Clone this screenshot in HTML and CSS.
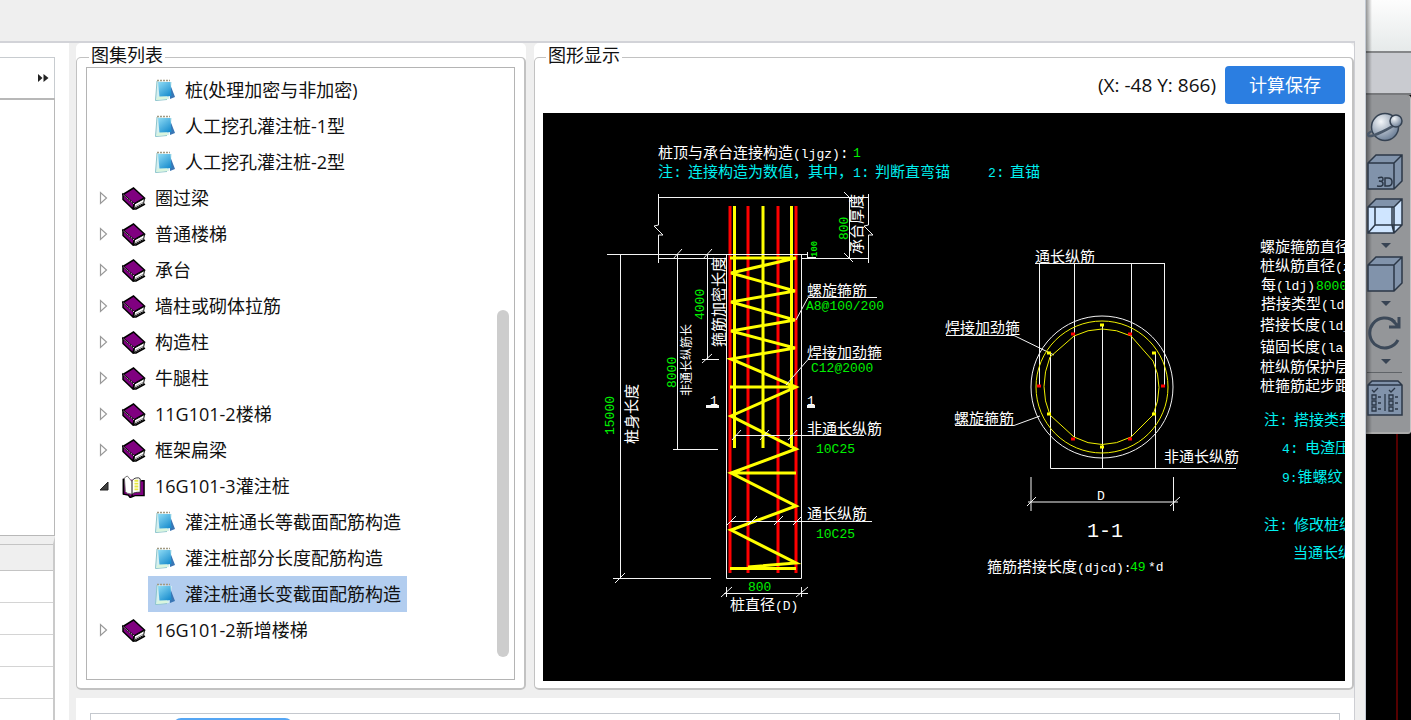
FILE: index.html
```html
<!DOCTYPE html>
<html lang="zh-CN">
<head>
<meta charset="utf-8">
<title>图集列表</title>
<link rel="stylesheet" href="styles.css">
</head>
<body>
<svg class="defs" aria-hidden="true">
  <defs>
    <linearGradient id="sheet" x1="0" y1="0" x2="0.7" y2="1"><stop offset="0" stop-color="#8fdcf5"/><stop offset="1" stop-color="#1c8fcf"/></linearGradient>
    <radialGradient id="orb" cx="0.35" cy="0.3" r="0.7"><stop offset="0" stop-color="#f4f7fa"/><stop offset="1" stop-color="#71839a"/></radialGradient>
  </defs>
  <symbol id="note" viewBox="0 0 20 23">
    <path d="M15 5l5 13-5 2z" fill="#3a76b4"/>
    <path d="M2 2L.5 21.500 14 20l3-17z" fill="#d5eff0"/>
    <path d="M2 2L.5 21.500l11.500-1" fill="none" stroke="#8cc4cc"/>
    <path d="M3 3h12.500l1 14-12 1z" fill="url(#sheet)"/>
    <path d="M3 17.500h9l1 2.500-12 1z" fill="#d9f5de"/>
    <path d="M2 1.500h13" stroke="#a39a82" stroke-width="1.500" stroke-dasharray="2 1"/>
  </symbol>
  <symbol id="book" viewBox="0 0 24 23">
    <path d="M1 7.500L11.500 1 22.500 11 12 17z" fill="#800080" stroke="#000" stroke-width="1.500"/>
    <path d="M1 7.500v5L11 22l1-5z" fill="#800080" stroke="#000" stroke-width="1.500"/>
    <path d="M1.500 8L12 17" stroke="#e6bfe6" stroke-dasharray="1.500 1"/>
    <path d="M12.500 17l10-5.500-1 5-9.500 5z" fill="#fff" stroke="#000"/>
    <path d="M13 19.500l8.500-4.500" stroke="#999"/>
    <path d="M11 22h3l9-5" fill="none" stroke="#000" stroke-width="1.500"/>
  </symbol>
  <symbol id="open-book" viewBox="0 0 24 24">
    <path d="M1 4v16l5 1 2 2.500 5-2h9.500V6h-3" fill="#800080" stroke="#000" stroke-width="1.500"/>
    <path d="M2 3l3-2 5 6v13l-5-1-2-2z" fill="#fff" stroke="#777"/>
    <path d="M10 6c2-3 4-3 7-3l1.500 1v14c-4 0-6 0-8.500 2z" fill="#fff" stroke="#333"/>
    <path d="M12.500 6h4M12.500 9h4M12.500 12h4M12.500 15h4" stroke="#e6e640" stroke-width="2"/>
    <path d="M1 4v16M10 20v2" stroke="#000" stroke-width="1.500"/>
  </symbol>
  <symbol id="closed" viewBox="0 0 10 14"><path d="M1.500 1.500v11l6-5.500z" fill="#fff" stroke="#999" stroke-width="1.200"/></symbol>
  <symbol id="opened" viewBox="0 0 10 14"><path d="M9 3v8H1z" fill="#404040" stroke="#222"/></symbol>
</svg>

<main class="window">
  <header class="titlebar"></header>
  <div class="workspace">
    <aside class="side">
      <div class="side-tools"><button class="more" aria-label="更多"><svg viewBox="0 0 12 10"><path d="M1 1v8l4.500-4zM6.500 1v8l5-4z" fill="#222"/></svg></button></div>
      <div class="side-view"></div>
      <table class="side-table">
        <thead><tr><th></th></tr></thead>
        <tbody><tr><td></td></tr><tr><td></td></tr><tr><td></td></tr><tr><td></td></tr><tr><td></td></tr></tbody>
      </table>
    </aside>

    <div class="content">
      <div class="groups">
        <fieldset class="group">
          <legend>图集列表</legend>
          <div class="list">
            <ul class="tree">
              <li class="leaf"><span class="item"><svg class="note"><use href="#note"/></svg>桩(处理加密与非加密)</span></li>
              <li class="leaf"><span class="item"><svg class="note"><use href="#note"/></svg>人工挖孔灌注桩-1型</span></li>
              <li class="leaf"><span class="item"><svg class="note"><use href="#note"/></svg>人工挖孔灌注桩-2型</span></li>
              <li><svg class="arrow"><use href="#closed"/></svg><svg class="book"><use href="#book"/></svg>圈过梁</li>
              <li><svg class="arrow"><use href="#closed"/></svg><svg class="book"><use href="#book"/></svg>普通楼梯</li>
              <li><svg class="arrow"><use href="#closed"/></svg><svg class="book"><use href="#book"/></svg>承台</li>
              <li><svg class="arrow"><use href="#closed"/></svg><svg class="book"><use href="#book"/></svg>墙柱或砌体拉筋</li>
              <li><svg class="arrow"><use href="#closed"/></svg><svg class="book"><use href="#book"/></svg>构造柱</li>
              <li><svg class="arrow"><use href="#closed"/></svg><svg class="book"><use href="#book"/></svg>牛腿柱</li>
              <li><svg class="arrow"><use href="#closed"/></svg><svg class="book"><use href="#book"/></svg>11G101-2楼梯</li>
              <li><svg class="arrow"><use href="#closed"/></svg><svg class="book"><use href="#book"/></svg>框架扁梁</li>
              <li><svg class="arrow"><use href="#opened"/></svg><svg class="book"><use href="#open-book"/></svg>16G101-3灌注桩</li>
              <li class="leaf"><span class="item"><svg class="note"><use href="#note"/></svg>灌注桩通长等截面配筋构造</span></li>
              <li class="leaf"><span class="item"><svg class="note"><use href="#note"/></svg>灌注桩部分长度配筋构造</span></li>
              <li class="leaf"><span class="item selected"><svg class="note"><use href="#note"/></svg>灌注桩通长变截面配筋构造</span></li>
              <li><svg class="arrow"><use href="#closed"/></svg><svg class="book"><use href="#book"/></svg>16G101-2新增楼梯</li>
            </ul>
            <div class="track"><div class="thumb"></div></div>
          </div>
        </fieldset>

        <fieldset class="group view">
          <legend>图形显示</legend>
          <div class="view-bar"><output class="coords">(X: -48 Y: 866)</output><button class="save">计算保存</button></div>
          <svg class="drawing" viewBox="543 114 802 568" preserveAspectRatio="xMinYMin slice">
            <g class="red">
              <path d="M730 207V574M748 207V574M778 207V574M796 207V574"/>
            </g>
            <g class="yellow">
              <path d="M734.500 207V449M763 207V449M791.500 207V449"/>
              <path d="M730 259H796L731 274L795 292L731 303L795 321L731 332L795 349L731 360L796 388L731 417L796 450L731 474L796 507L731 531L796 564L748 568M730 388H796M730 474H796M730 569.500H796"/>
            </g>
            <g class="white">
              <path d="M658.500 195V226L654 227L663 236L658.500 236V264M658 198.500H869M658 259.500H726M801 259.500H869M868.500 195V226L864 227L873 236L868.500 236V264"/>
              <path d="M849.500 198V260M844 193L853 202M844 254L853 263"/>
              <path d="M607 255.500H808M807.500 253V260M808 258.500H816M620.500 255V579M613 579.500H711M615 584L625 574M677.500 255V450M673 450.500H718M673 260L682 250M707.500 255V360M702 360.500H719M703 260L712 250M702 364L712 355"/>
              <path d="M726.500 255.500H801.500V579.500H726.500z"/>
              <path d="M726.500 588V598M801.500 588V598M724 594.500H808M721 598L732 588M796 598L808 588"/>
              <path d="M796 321L808 298.500H877M786 386L808 360.500H877M735 436.500H864M731 522.500H872"/>
              <path d="M732 441L741 431M760 441L769 431M788 441L797 431M727 526L736 517M748 526L757 517M774 526L783 517M793 526L802 517"/>
              <path class="heavy" d="M706 407.500H719M807 407.500H815"/>
              <path d="M1035 264.500H1164.500M1039.500 264V388M1074.500 264V438M1131.500 264V438M1164.500 264V388M1050.500 355V469.500H1236M1102.500 326V469M1155.500 355V469"/>
              <path d="M946 336.500H1014L1054 356M955 426.500H1014L1040 417"/>
              <circle cx="1102" cy="388" r="71"/>
              <path d="M1031 478V512M1173.500 478V512M1028 503H1178M1027 507L1036 498M1170 507L1180 498"/>
            </g>
            <g class="ring">
              <circle cx="1102" cy="388" r="66"/>
              <path d="M1074 337Q1102 323 1131 337L1153 362Q1165 388 1153 416L1131 438Q1102 453 1074 438L1050 416Q1038 388 1050 358z"/>
            </g>
            <path class="dot-y" d="M1100 326h4M1047 354h4M1152 354h4M1047 415h4M1152 415h4M1100 448h4"/>
            <path class="dot-r" d="M1071 335h4M1128 335h4M1037 387h4M1161 387h4M1071 440h4M1128 440h4"/>

            <g class="cad">
              <text x="658" y="159">桩顶与承台连接构造<tspan class="code">(ljgz)</tspan>:</text>
              <text class="code green" x="853" y="158">1</text>
              <text class="cyan" x="658" y="178">注: </text>
              <text class="cyan" x="688" y="178">连接构造为数值，其中，<tspan class="code">1</tspan>:</text>
              <text class="cyan" x="875" y="178">判断直弯锚</text>
              <text class="cyan" x="988" y="178"><tspan class="code">2</tspan>:</text>
              <text class="cyan" x="1010" y="178">直锚</text>
              <text x="807" y="297">螺旋箍筋</text>
              <text class="code green" x="806" y="311">A8@100/200</text>
              <text x="807" y="359">焊接加劲箍</text>
              <text class="code green" x="811" y="373">C12@2000</text>
              <text x="807" y="435">非通长纵筋</text>
              <text class="code green" x="816" y="454">10C25</text>
              <text x="807" y="520">通长纵筋</text>
              <text class="code green" x="816" y="539">10C25</text>
              <text class="code green" x="748" y="592">800</text>
              <text x="730" y="611">桩直径<tspan class="code">(D)</tspan></text>
              <text class="code" x="710" y="406">1</text>
              <text class="code" x="807" y="406">1</text>
              <text x="1035" y="263">通长纵筋</text>
              <text x="945" y="334">焊接加劲箍</text>
              <text x="954" y="425">螺旋箍筋</text>
              <text x="1164" y="463">非通长纵筋</text>
              <text class="code" x="1097" y="501">D</text>
              <text class="section" x="1087" y="538">1-1</text>
              <text x="987" y="573">箍筋搭接长度<tspan class="code">(djcd):</tspan></text>
              <text class="code green" x="1130" y="572">49</text>
              <text class="code" x="1148" y="572">*d</text>

              <text transform="translate(614 436) rotate(-90)" class="code green">15000</text>
              <text transform="translate(637 445) rotate(-90)">桩身长度</text>
              <text transform="translate(676 389) rotate(-90)" class="code green">8000</text>
              <text transform="translate(691 397) rotate(-90)" class="small">非通长纵筋长</text>
              <text transform="translate(704 321) rotate(-90)" class="code green">4000</text>
              <text transform="translate(724 348) rotate(-90)">箍筋加密长度</text>
              <text transform="translate(817 258) rotate(-90)" class="tiny green">100</text>
              <text transform="translate(848 241) rotate(-90)" class="code green">800</text>
              <text transform="translate(862 255) rotate(-90)">承台厚度</text>

              <text x="1260" y="253">螺旋箍筋直径</text>
              <text x="1260" y="272">桩纵筋直径<tspan class="code">(z</tspan></text>
              <text x="1261" y="291">每<tspan class="code">(ldj)</tspan></text>
              <text class="code green" x="1316" y="291">8000</text>
              <text x="1261" y="310">搭接类型<tspan class="code">(ld</tspan></text>
              <text x="1260" y="331">搭接长度<tspan class="code">(ld_</tspan></text>
              <text x="1260" y="353">锚固长度<tspan class="code">(la)</tspan></text>
              <text x="1260" y="373">桩纵筋保护层</text>
              <text x="1260" y="392">桩箍筋起步距</text>
              <text class="cyan" x="1264" y="426">注:</text>
              <text class="cyan" x="1294" y="426">搭接类型</text>
              <text class="cyan" x="1282" y="454"><tspan class="code">4</tspan>:</text>
              <text class="cyan" x="1305" y="454">电渣压</text>
              <text class="cyan" x="1282" y="483"><tspan class="code">9:</tspan>锥螺纹</text>
              <text class="cyan" x="1264" y="531">注:</text>
              <text class="cyan" x="1294" y="531">修改桩纵</text>
              <text class="cyan" x="1293" y="559">当通长纵</text>
            </g>
          </svg>
        </fieldset>
      </div>
      <section class="lower"><div class="tabs"><div class="tab"></div></div></section>
    </div>
  </div>
</main>

<aside class="backdrop">
  <div class="ribbon"></div>
  <div class="ribbon-foot"></div>
  <nav class="dock">
    <button aria-label="动态观察"><svg viewBox="0 0 36 36"><circle cx="18" cy="17" r="13.500" fill="url(#orb)" stroke="#354252" stroke-width="1.500"/><path d="M5 21q-6 3-3 5c4 1 22-8 28-13" fill="none" stroke="#4a5869" stroke-width="2.500"/><circle cx="29" cy="11" r="6" fill="url(#orb)" stroke="#354252" stroke-width="1.500"/></svg></button>
    <button aria-label="三维"><svg viewBox="0 0 36 36"><path d="M1 9L9 1h26v26l-8 8H1zM1 9h26v26M27 9l8-8" fill="#8193ab" stroke="#2b3747" stroke-width="1.500"/><g fill="none" stroke="#2b3747" stroke-width="1.500"><path d="M11 24q5-2 5 1t-4 2q4 0 4 3t-6 2M18 24h3q4 0 4 4t-4 4h-3z"/></g></svg></button>
    <button aria-label="线框"><svg viewBox="0 0 36 36"><path d="M1 9L9 1h26v26l-8 8H1z" fill="#cfe5ff"/><path d="M1 9L9 1h26l-8 8z" fill="#8193ab"/><path d="M1 9L9 1h26v26l-8 8H1zM1 9h26v26M27 9l8-8M8 9v18h27M8 27l-7 8M25 9v18M27 35l-2-8" fill="none" stroke="#2b3747" stroke-width="1.500"/></svg></button>
    <i class="caret"></i>
    <button aria-label="视图"><svg viewBox="0 0 36 36"><path d="M1 9L9 1h26v26l-8 8H1zM1 9h26v26M27 9l8-8" fill="#8193ab" stroke="#2b3747" stroke-width="1.500"/></svg></button>
    <i class="caret"></i>
    <button aria-label="旋转"><svg viewBox="0 0 36 36"><path d="M28 8A15 15 0 1 0 31 26" fill="none" stroke="#3c4959" stroke-width="3"/><path d="M32 3v10H22M24 5l8 8" fill="none" stroke="#3c4959" stroke-width="3"/></svg></button>
    <i class="caret"></i>
    <hr>
    <button aria-label="选项"><svg viewBox="0 0 36 36"><path d="M1 5l4-4h26l4 4v30H1zM1 5h34" fill="#8193ab" stroke="#2b3747" stroke-width="1.500"/><path d="M5 10l2 2 4-4M22 10l2 2 4-4M5 15h4v4H5zM5 21h4v4H5zM5 27h4v4H5zM22 15h4v4h-4zM22 21h4v4h-4zM22 27h4v4h-4zM11 17h3M11 23h3M11 29h3M28 17h3M28 23h3M28 29h3M18 14v17" fill="none" stroke="#2b3747" stroke-width="1.300"/></svg></button>
  </nav>
  <div class="model"></div>
</aside>
</body>
</html>
```
FILE: styles.css
```css
* { box-sizing: border-box; }
body {
  margin: 0;
  height: 100vh;
  display: flex;
  overflow: hidden;
  background: #000;
  color: #111;
  font: 18px/20px "Open Sans", "Noto Sans CJK SC", sans-serif;
}
button { margin: 0; padding: 0; border: 0; background: none; font: inherit; }
.defs { position: absolute; width: 0; height: 0; }

.window {
  flex: 1;
  min-width: 0;
  display: flex;
  flex-direction: column;
  background: #efefef;
  border-right: 1px solid #c3cad3;
}
.titlebar { flex: 0 0 41px; }
.workspace {
  flex: 1;
  min-height: 0;
  display: flex;
  gap: 7px;
  margin-right: 10px;
  border-top: 2px solid #d2d3d8;
  border-right: 1px solid #cdced3;
}

.side {
  flex: 0 0 69px;
  display: flex;
  flex-direction: column;
  padding: 14px 14px 0 0;
  background: #fff;
}
.side-tools {
  flex: 0 0 41px;
  display: flex;
  align-items: center;
  justify-content: flex-end;
  padding-right: 5px;
  border: solid #c8ccd0;
  border-width: 1px 1px 0 0;
}
.more { width: 12px; height: 10px; display: flex; }
.side-view {
  flex: 0 0 438px;
  border: solid #b8b8b8;
  border-width: 2px 1px 1px 0;
}
.side-table {
  width: 100%;
  border-top: 8px solid #efefef;
  border-right: 2px solid #cacaca;
  border-spacing: 0;
}
.side-table th { height: 27px; padding: 0; background: #efefef; border: solid #c4c4c4; border-width: 1px 0; }
.side-table td { height: 32px; padding: 0; border-bottom: 1px solid #d4d4d4; }

.content { flex: 1; min-width: 0; display: flex; flex-direction: column; gap: 8px; }
.groups {
  flex: 1;
  min-height: 0;
  display: grid;
  grid-template-columns: 450px minmax(0, 1fr);
  gap: 8px;
}
.group {
  position: relative;
  min-width: 0;
  margin: 4px 0 0;
  padding: 0 9px 8px;
  display: flex;
  flex-direction: column;
  border: 2px solid #c2c2c2;
  border-width: 1px 2px 2px 1px;
  border-radius: 5px;
  background: #fff;
  box-shadow: 0 -14px 0 #fff;
}
.group legend { margin-left: 3px; padding: 0 2px; height: 20px; line-height: 16px; background: #fff; }
.list {
  flex: 1;
  min-height: 0;
  display: flex;
  border: 1px solid #b4b4b4;
}
.tree { flex: 1; margin: 0; padding: 4px 0 0 12px; list-style: none; }
.tree li { display: flex; align-items: center; height: 36px; white-space: nowrap; }
.tree .leaf { padding-left: 49px; }
.item { display: flex; align-items: center; height: 36px; padding: 0 6px 0 7px; }
.selected { background: #b2cdef; }
.arrow { width: 10px; height: 14px; margin-right: 13px; }
.book { width: 24px; height: 23px; margin-right: 9px; }
.note { width: 20px; height: 23px; margin-right: 10px; }
.track { width: 12px; margin-right: 5px; padding-bottom: 22px; display: flex; align-items: flex-end; }
.thumb { width: 100%; height: 59%; border-radius: 6px; background: #cdcdcd; }

.view { padding: 0 7px 7px 8px; }
.view-bar { display: flex; align-items: center; justify-content: flex-end; gap: 9px; height: 36px; margin-bottom: 10px; }
.coords { font-size: 19px; }
.save { width: 120px; height: 38px; border-radius: 4px; background: #2b7ee1; color: #fff; }
.drawing { flex: 1; width: 100%; min-height: 0; background: #000; }

.white, .yellow, .red, .ring { fill: none; }
.white { stroke: #f4f4f4; }
.heavy { stroke-width: 3px; }
.yellow { stroke: #ff0; stroke-width: 3px; }
.red { stroke: #f00; stroke-width: 3px; }
.ring { stroke: #f0f000; }
.dot-y { stroke: #ff0; stroke-width: 3px; }
.dot-r { stroke: #f00; stroke-width: 3px; }
.cad { font: 15px "Liberation Mono", "Noto Sans CJK SC", monospace; fill: #fff; }
.code { font-size: 13px; }
.small { font-size: 12px; }
.tiny { font-size: 9px; font-weight: bold; }
.section { font-size: 20px; }
.cad .green { fill: #00f000; }
.cad .cyan { fill: #00f0f0; }

.lower { flex: 0 0 22px; padding: 15px 14px 0 14px; background: #fff; }
.tabs { height: 7px; padding: 4px 0 0 82px; border: solid #c4c8ce; border-width: 1px 1px 0; overflow: hidden; }
.tab { width: 120px; height: 20px; border-radius: 8px; background: #55a6f4; }

.backdrop { flex: 0 0 45px; display: flex; flex-direction: column; position: relative; }
.backdrop::before {
  content: "";
  position: absolute;
  inset: 0 auto 0 0;
  width: 6px;
  background: linear-gradient(90deg, #0006, #0000);
}
.ribbon { flex: 0 0 53px; background: linear-gradient(#fdfdfd, #e6eaea); border-bottom: 2px solid #858789; }
.ribbon-foot { flex: 0 0 42px; background: #c9cbd0; border-bottom: 2px solid #77797c; }
.dock {
  flex: 0 0 339px;
  display: flex;
  flex-direction: column;
  align-items: flex-start;
  padding: 15px 0 0 1px;
  background: #949699;
  border-right: 1px solid #c2c2c2;
  border-bottom: 2px solid #aaa;
  border-radius: 0 4px 3px 0;
}
.dock button { width: 36px; height: 36px; margin-bottom: 8px; position: relative; }
.dock svg { width: 36px; height: 36px; display: block; }
.caret { margin: 1px 0 8px 14px; border: 5px solid transparent; border-top-color: #374353; border-bottom: 0; }
.dock hr { width: 35px; margin: 0 0 7px; border: 0; border-top: 1px solid #606468; }
.model { flex: 1; margin-right: 13px; border-right: 2px solid #500; }
```
